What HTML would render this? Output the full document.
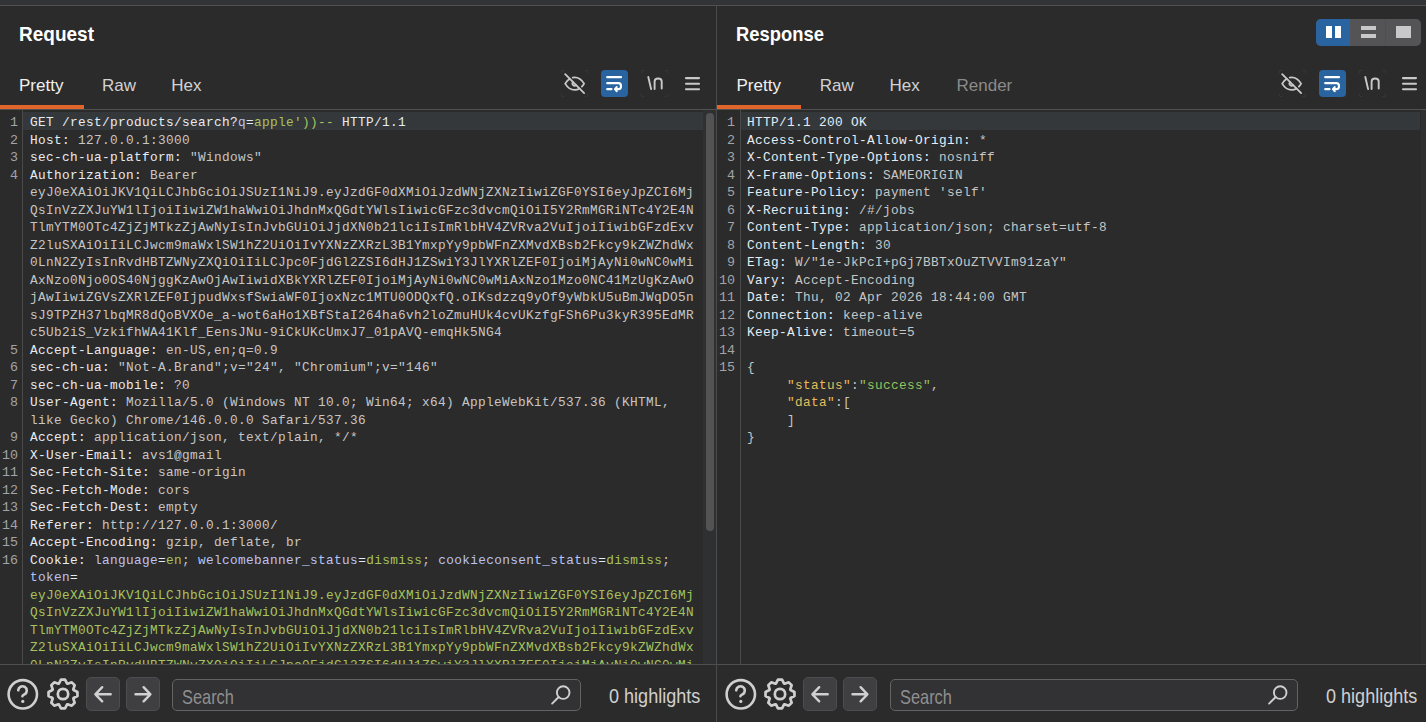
<!DOCTYPE html><html><head><meta charset="utf-8"><style>
*{margin:0;padding:0;box-sizing:border-box}
html,body{width:1426px;height:722px;overflow:hidden;background:#2b2b2b}
body{position:relative;font-family:"Liberation Sans",sans-serif}
.topstrip{position:absolute;left:0;top:0;width:1426px;height:5px;background:#333437}
.topline{position:absolute;left:0;top:5px;width:1426px;height:1px;background:#505052}
.divider{position:absolute;left:716px;top:6px;width:1px;height:716px;background:#4b4b4b}
.title{position:absolute;top:22px;height:24px;line-height:24px;font-weight:bold;color:#ffffff;transform:translateY(-0.5px) scaleY(1.06);transform-origin:0 0}
.tab{position:absolute;top:75px;height:22px;line-height:22px;font-size:17px;color:#d2d2d2}
.tab.sel{color:#f0f0f0}
.tab.dis{color:#8a8a8a}
.uline{position:absolute;top:105px;width:84px;height:4px;background:#e0652b}
.sepline{position:absolute;left:0;top:109px;width:1426px;height:1px;background:#515151}
.ic{position:absolute;display:block}
.bluebtn{position:absolute;width:27px;height:27px;border-radius:4px;background:#2964a0}
.bluebtn svg{display:block}
.hl{position:absolute;top:112px;width:679px;height:18px;background:#34383b}
.track{position:absolute;top:110px;width:13px;height:554px;background:#2f3031}
.thumb{position:absolute;top:113px;width:7.6px;height:418px;border-radius:3.8px;background:#535354}
.gutline{position:absolute;top:110px;width:1px;height:554px;background:#4a4a4a}
.code{position:absolute;top:0;width:703px;height:664px;overflow:hidden;clip-path:inset(110px 0 0 0)}
.row{position:absolute;left:30px;height:17.5px;line-height:17.5px;white-space:pre;font-family:"Liberation Mono",monospace;font-size:12.75px;letter-spacing:0.35px;color:#c6c6c6}
.ln{position:absolute;left:0;width:18px;text-align:right;height:17.5px;line-height:17.5px;font-family:"Liberation Mono",monospace;font-size:13.333px;color:#a2a4a8}
.hn{color:#e6ecf4}
.hv{color:#c6c6c6}
.ck{color:#b9c4f4}
.gr{color:#a6c35f}
.jk{color:#e4bd5e}
.js{color:#93c45e}
.botline{position:absolute;left:0;top:664px;width:1426px;height:1px;background:#4f4f4f}
.navbtn{position:absolute;top:677px;width:34px;height:34px;border-radius:5px;background:#3f3f41;border:1px solid #4d4d4f}
.navbtn svg{display:block;margin:-1px}
.search{position:absolute;top:679px;width:409px;height:32px;border-radius:5px;background:#323234;border:1.5px solid #636363}
.search span{position:absolute;left:9px;top:5px;line-height:22px;font-size:18px;color:#8f8f8f;transform:scale(0.91,1.1);transform-origin:0 0}
.hlcount{position:absolute;top:683px;line-height:24px;font-size:19px;color:#d0d0d0;transform:translateY(0.5px) scale(0.95,1.08);transform-origin:0 0}
.layout{position:absolute;left:1316px;top:19px;width:105px;height:27px;border-radius:5px;background:#545456;overflow:hidden}
.layout .b{position:absolute;left:0;top:0;width:34px;height:27px;background:#2964a0}
</style></head><body>
<div class="topstrip"></div><div class="topline"></div>
<div class="sepline"></div><div class="botline"></div>
<div class="title" style="left:19px;font-size:19px">Request</div>
<div class="tab sel" style="left:19px">Pretty</div>
<div class="tab " style="left:102px">Raw</div>
<div class="tab " style="left:171.3px">Hex</div>
<div class="uline" style="left:0px"></div>
<svg class="ic" style="left:561px;top:70px" width="27" height="27" viewBox="0 0 27 27" fill="none" stroke="#333537" stroke-width="1"><path d="M0.5 3.5V0.5H3.5M23.5 0.5H26.5V3.5M26.5 23.5V26.5H23.5M3.5 26.5H0.5V23.5"/></svg>
<svg class="ic" style="left:641px;top:70px" width="27" height="27" viewBox="0 0 27 27" fill="none" stroke="#333537" stroke-width="1"><path d="M0.5 3.5V0.5H3.5M23.5 0.5H26.5V3.5M26.5 23.5V26.5H23.5M3.5 26.5H0.5V23.5"/></svg>
<svg class="ic" style="left:561.9px;top:70.9px" width="25.3" height="25.3" viewBox="0 0 24 24" fill="none" stroke="#c9c9c9" stroke-width="1.7" stroke-linecap="round" stroke-linejoin="round"><path d="M10.585 10.587a2 2 0 0 0 2.829 2.828"/><path d="M16.681 16.673a8.717 8.717 0 0 1 -4.681 1.327c-3.6 0 -6.6 -2 -9 -6c1.272 -2.12 2.712 -3.678 4.32 -4.674m2.86 -1.146a9.055 9.055 0 0 1 1.82 -.18c3.6 0 6.6 2 9 6c-.666 1.11 -1.379 2.067 -2.138 2.87"/><path d="M3 3l18 18"/></svg>
<div class="bluebtn" style="left:601px;top:70px"><svg width="27" height="27" viewBox="-3.19 -1.15 31.3 27" preserveAspectRatio="none" fill="none" stroke="#ffffff" stroke-width="2.1" stroke-linecap="round" stroke-linejoin="round"><path vector-effect="non-scaling-stroke" d="M4 6h16"/><path vector-effect="non-scaling-stroke" d="M4 18h5"/><path vector-effect="non-scaling-stroke" d="M4 12h13a3 3 0 0 1 0 6h-4l2 -2m0 4l-2 -2"/></svg></div>
<svg class="ic" style="left:641px;top:70px" width="27" height="27" viewBox="0 0 27 27" fill="none" stroke="#c9c9c9" stroke-width="1.9" stroke-linecap="round" stroke-linejoin="round"><path d="M7.3 7.0L10.1 19.1"/><path d="M13.6 19V11.6C13.6 9.6 15.2 8.5 17.15 8.5C19.1 8.5 20.7 9.6 20.7 11.6V18.6"/></svg>
<svg class="ic" style="left:685px;top:70px" width="27" height="27" viewBox="0 0 27 27" fill="none" stroke="#c9c9c9" stroke-width="2.1" stroke-linecap="round"><path d="M1 8.1h13M1 13.7h13M1 19.2h13"/></svg>
<div class="hl" style="left:23px;width:680px"></div>
<div class="track" style="left:703px"></div>
<div class="thumb" style="left:706px"></div>
<div class="gutline" style="left:22px"></div>
<div class="code" style="left:0px"><div class="ln" style="top:114.00px">1</div>
<div class="row" style="top:114.00px"><span class="hn">GET /rest/products/search?</span><span class="ck">q</span><span class="hn">=</span><span class="gr">apple'))--</span><span class="hn"> HTTP/1.1</span></div>
<div class="ln" style="top:131.50px">2</div>
<div class="row" style="top:131.50px"><span class="hn">Host:</span><span class="hv"> 127.0.0.1:3000</span></div>
<div class="ln" style="top:149.00px">3</div>
<div class="row" style="top:149.00px"><span class="hn">sec-ch-ua-platform:</span><span class="hv"> "Windows"</span></div>
<div class="ln" style="top:166.50px">4</div>
<div class="row" style="top:166.50px"><span class="hn">Authorization:</span><span class="hv"> Bearer</span></div>
<div class="row" style="top:184.00px"><span class="hv">eyJ0eXAiOiJKV1QiLCJhbGciOiJSUzI1NiJ9.eyJzdGF0dXMiOiJzdWNjZXNzIiwiZGF0YSI6eyJpZCI6Mj</span></div>
<div class="row" style="top:201.50px"><span class="hv">QsInVzZXJuYW1lIjoiIiwiZW1haWwiOiJhdnMxQGdtYWlsIiwicGFzc3dvcmQiOiI5Y2RmMGRiNTc4Y2E4N</span></div>
<div class="row" style="top:219.00px"><span class="hv">TlmYTM0OTc4ZjZjMTkzZjAwNyIsInJvbGUiOiJjdXN0b21lciIsImRlbHV4ZVRva2VuIjoiIiwibGFzdExv</span></div>
<div class="row" style="top:236.50px"><span class="hv">Z2luSXAiOiIiLCJwcm9maWxlSW1hZ2UiOiIvYXNzZXRzL3B1YmxpYy9pbWFnZXMvdXBsb2Fkcy9kZWZhdWx</span></div>
<div class="row" style="top:254.00px"><span class="hv">0LnN2ZyIsInRvdHBTZWNyZXQiOiIiLCJpc0FjdGl2ZSI6dHJ1ZSwiY3JlYXRlZEF0IjoiMjAyNi0wNC0wMi</span></div>
<div class="row" style="top:271.50px"><span class="hv">AxNzo0Njo0OS40NjggKzAwOjAwIiwidXBkYXRlZEF0IjoiMjAyNi0wNC0wMiAxNzo1Mzo0NC41MzUgKzAwO</span></div>
<div class="row" style="top:289.00px"><span class="hv">jAwIiwiZGVsZXRlZEF0IjpudWxsfSwiaWF0IjoxNzc1MTU0ODQxfQ.oIKsdzzq9yOf9yWbkU5uBmJWqDO5n</span></div>
<div class="row" style="top:306.50px"><span class="hv">sJ9TPZH37lbqMR8dQoBVXOe_a-wot6aHo1XBfStaI264ha6vh2loZmuHUk4cvUKzfgFSh6Pu3kyR395EdMR</span></div>
<div class="row" style="top:324.00px"><span class="hv">c5Ub2iS_VzkifhWA41Klf_EensJNu-9iCkUKcUmxJ7_01pAVQ-emqHk5NG4</span></div>
<div class="ln" style="top:341.50px">5</div>
<div class="row" style="top:341.50px"><span class="hn">Accept-Language:</span><span class="hv"> en-US,en;q=0.9</span></div>
<div class="ln" style="top:359.00px">6</div>
<div class="row" style="top:359.00px"><span class="hn">sec-ch-ua:</span><span class="hv"> "Not-A.Brand";v="24", "Chromium";v="146"</span></div>
<div class="ln" style="top:376.50px">7</div>
<div class="row" style="top:376.50px"><span class="hn">sec-ch-ua-mobile:</span><span class="hv"> ?0</span></div>
<div class="ln" style="top:394.00px">8</div>
<div class="row" style="top:394.00px"><span class="hn">User-Agent:</span><span class="hv"> Mozilla/5.0 (Windows NT 10.0; Win64; x64) AppleWebKit/537.36 (KHTML,</span></div>
<div class="row" style="top:411.50px"><span class="hv">like Gecko) Chrome/146.0.0.0 Safari/537.36</span></div>
<div class="ln" style="top:429.00px">9</div>
<div class="row" style="top:429.00px"><span class="hn">Accept:</span><span class="hv"> application/json, text/plain, */*</span></div>
<div class="ln" style="top:446.50px">10</div>
<div class="row" style="top:446.50px"><span class="hn">X-User-Email:</span><span class="hv"> avs1@gmail</span></div>
<div class="ln" style="top:464.00px">11</div>
<div class="row" style="top:464.00px"><span class="hn">Sec-Fetch-Site:</span><span class="hv"> same-origin</span></div>
<div class="ln" style="top:481.50px">12</div>
<div class="row" style="top:481.50px"><span class="hn">Sec-Fetch-Mode:</span><span class="hv"> cors</span></div>
<div class="ln" style="top:499.00px">13</div>
<div class="row" style="top:499.00px"><span class="hn">Sec-Fetch-Dest:</span><span class="hv"> empty</span></div>
<div class="ln" style="top:516.50px">14</div>
<div class="row" style="top:516.50px"><span class="hn">Referer:</span><span class="hv"> http://127.0.0.1:3000/</span></div>
<div class="ln" style="top:534.00px">15</div>
<div class="row" style="top:534.00px"><span class="hn">Accept-Encoding:</span><span class="hv"> gzip, deflate, br</span></div>
<div class="ln" style="top:551.50px">16</div>
<div class="row" style="top:551.50px"><span class="hn">Cookie:</span><span class="hv"> </span><span class="ck">language</span><span class="hn">=</span><span class="gr">en</span><span class="hv">; </span><span class="ck">welcomebanner_status</span><span class="hn">=</span><span class="gr">dismiss</span><span class="hv">; </span><span class="ck">cookieconsent_status</span><span class="hn">=</span><span class="gr">dismiss</span><span class="hv">; </span></div>
<div class="row" style="top:569.00px"><span class="ck">token</span><span class="hn">=</span></div>
<div class="row" style="top:586.50px"><span class="gr">eyJ0eXAiOiJKV1QiLCJhbGciOiJSUzI1NiJ9.eyJzdGF0dXMiOiJzdWNjZXNzIiwiZGF0YSI6eyJpZCI6Mj</span></div>
<div class="row" style="top:604.00px"><span class="gr">QsInVzZXJuYW1lIjoiIiwiZW1haWwiOiJhdnMxQGdtYWlsIiwicGFzc3dvcmQiOiI5Y2RmMGRiNTc4Y2E4N</span></div>
<div class="row" style="top:621.50px"><span class="gr">TlmYTM0OTc4ZjZjMTkzZjAwNyIsInJvbGUiOiJjdXN0b21lciIsImRlbHV4ZVRva2VuIjoiIiwibGFzdExv</span></div>
<div class="row" style="top:639.00px"><span class="gr">Z2luSXAiOiIiLCJwcm9maWxlSW1hZ2UiOiIvYXNzZXRzL3B1YmxpYy9pbWFnZXMvdXBsb2Fkcy9kZWZhdWx</span></div>
<div class="row" style="top:656.50px"><span class="gr">0LnN2ZyIsInRvdHBTZWNyZXQiOiIiLCJpc0FjdGl2ZSI6dHJ1ZSwiY3JlYXRlZEF0IjoiMjAyNi0wNC0wMi</span></div>
<div class="row" style="top:674.00px"><span class="gr">AxNzo0Njo0OS40NjggKzAwOjAwIiwidXBkYXRlZEF0IjoiMjAyNi0wNC0wMiAxNzo1Mzo0NC41MzUgKzAwO</span></div></div>
<svg class="ic" style="left:7px;top:676px" width="36" height="36" viewBox="0 0 36 36" fill="none" stroke="#cfcfcf" stroke-width="2.6" stroke-linecap="round" stroke-linejoin="round"><circle cx="15.8" cy="18.3" r="14.2"/><path d="M11.2 14.3A4.3 4.3 0 1 1 17.6 18.3C16.2 19.1 15.4 19.5 15.4 20.2"/><circle cx="15.8" cy="25.4" r="1.6" fill="#cfcfcf" stroke="none"/></svg>
<svg class="ic" style="left:45px;top:676px" width="36" height="36" viewBox="0 0 36 36" fill="none" stroke="#cfcfcf" stroke-width="2.7" stroke-linejoin="round"><path d="M28.58 14.02 L32.46 15.96 L32.46 20.04 L28.58 21.98 L28.29 22.66 L29.66 26.78 L26.78 29.66 L22.66 28.29 L21.98 28.58 L20.04 32.46 L15.96 32.46 L14.02 28.58 L13.34 28.29 L9.22 29.66 L6.34 26.78 L7.71 22.66 L7.42 21.98 L3.54 20.04 L3.54 15.96 L7.42 14.02 L7.71 13.34 L6.34 9.22 L9.22 6.34 L13.34 7.71 L14.02 7.42 L15.96 3.54 L20.04 3.54 L21.98 7.42 L22.66 7.71 L26.78 6.34 L29.66 9.22 L28.29 13.34Z"/><circle cx="18" cy="18" r="5.2"/></svg>
<div class="navbtn" style="left:86px"><svg width="34" height="34" viewBox="0 0 34 34" fill="none" stroke="#d0d0d0" stroke-width="2.4" stroke-linecap="round" stroke-linejoin="round"><path d="M9.4 17.3h15.3M16.2 10.2L9.4 17.3L16.2 24.3"/></svg></div>
<div class="navbtn" style="left:126px"><svg width="34" height="34" viewBox="0 0 34 34" fill="none" stroke="#d0d0d0" stroke-width="2.4" stroke-linecap="round" stroke-linejoin="round"><path d="M9.5 17.3h14.9M17.6 10.2L24.4 17.3L17.6 24.3"/></svg></div>
<div class="search" style="left:172px;width:409px"><span>Search</span></div>
<svg class="ic" style="left:548px;top:679px" width="32" height="32" viewBox="0 0 32 32" fill="none" stroke="#cfcfcf" stroke-width="1.9" stroke-linecap="round"><circle cx="15.2" cy="13.6" r="6.3"/><path d="M10.7 18L4.1 24.6"/></svg>
<div class="hlcount" style="left:609px">0 highlights</div>
<div class="title" style="left:736px;font-size:18.4px">Response</div>
<div class="tab sel" style="left:736.5px">Pretty</div>
<div class="tab " style="left:819.8px">Raw</div>
<div class="tab " style="left:889.5px">Hex</div>
<div class="tab dis" style="left:956.5px">Render</div>
<div class="uline" style="left:717px"></div>
<svg class="ic" style="left:1279px;top:70px" width="27" height="27" viewBox="0 0 27 27" fill="none" stroke="#333537" stroke-width="1"><path d="M0.5 3.5V0.5H3.5M23.5 0.5H26.5V3.5M26.5 23.5V26.5H23.5M3.5 26.5H0.5V23.5"/></svg>
<svg class="ic" style="left:1359px;top:70px" width="27" height="27" viewBox="0 0 27 27" fill="none" stroke="#333537" stroke-width="1"><path d="M0.5 3.5V0.5H3.5M23.5 0.5H26.5V3.5M26.5 23.5V26.5H23.5M3.5 26.5H0.5V23.5"/></svg>
<svg class="ic" style="left:1278.9px;top:70.9px" width="25.3" height="25.3" viewBox="0 0 24 24" fill="none" stroke="#c9c9c9" stroke-width="1.7" stroke-linecap="round" stroke-linejoin="round"><path d="M10.585 10.587a2 2 0 0 0 2.829 2.828"/><path d="M16.681 16.673a8.717 8.717 0 0 1 -4.681 1.327c-3.6 0 -6.6 -2 -9 -6c1.272 -2.12 2.712 -3.678 4.32 -4.674m2.86 -1.146a9.055 9.055 0 0 1 1.82 -.18c3.6 0 6.6 2 9 6c-.666 1.11 -1.379 2.067 -2.138 2.87"/><path d="M3 3l18 18"/></svg>
<div class="bluebtn" style="left:1319px;top:70px"><svg width="27" height="27" viewBox="-3.19 -1.15 31.3 27" preserveAspectRatio="none" fill="none" stroke="#ffffff" stroke-width="2.1" stroke-linecap="round" stroke-linejoin="round"><path vector-effect="non-scaling-stroke" d="M4 6h16"/><path vector-effect="non-scaling-stroke" d="M4 18h5"/><path vector-effect="non-scaling-stroke" d="M4 12h13a3 3 0 0 1 0 6h-4l2 -2m0 4l-2 -2"/></svg></div>
<svg class="ic" style="left:1358px;top:70px" width="27" height="27" viewBox="0 0 27 27" fill="none" stroke="#c9c9c9" stroke-width="1.9" stroke-linecap="round" stroke-linejoin="round"><path d="M7.3 7.0L10.1 19.1"/><path d="M13.6 19V11.6C13.6 9.6 15.2 8.5 17.15 8.5C19.1 8.5 20.7 9.6 20.7 11.6V18.6"/></svg>
<svg class="ic" style="left:1402px;top:70px" width="27" height="27" viewBox="0 0 27 27" fill="none" stroke="#c9c9c9" stroke-width="2.1" stroke-linecap="round"><path d="M1 8.1h13M1 13.7h13M1 19.2h13"/></svg>
<div class="hl" style="left:741px;width:679px"></div>
<div class="track" style="left:1421px"></div>
<div class="gutline" style="left:740px"></div>
<div class="code" style="left:717px"><div class="ln" style="top:114.00px">1</div>
<div class="row" style="top:114.00px"><span class="hn">HTTP/1.1 200 OK</span></div>
<div class="ln" style="top:131.50px">2</div>
<div class="row" style="top:131.50px"><span class="hn">Access-Control-Allow-Origin:</span><span class="hv"> *</span></div>
<div class="ln" style="top:149.00px">3</div>
<div class="row" style="top:149.00px"><span class="hn">X-Content-Type-Options:</span><span class="hv"> nosniff</span></div>
<div class="ln" style="top:166.50px">4</div>
<div class="row" style="top:166.50px"><span class="hn">X-Frame-Options:</span><span class="hv"> SAMEORIGIN</span></div>
<div class="ln" style="top:184.00px">5</div>
<div class="row" style="top:184.00px"><span class="hn">Feature-Policy:</span><span class="hv"> payment 'self'</span></div>
<div class="ln" style="top:201.50px">6</div>
<div class="row" style="top:201.50px"><span class="hn">X-Recruiting:</span><span class="hv"> /#/jobs</span></div>
<div class="ln" style="top:219.00px">7</div>
<div class="row" style="top:219.00px"><span class="hn">Content-Type:</span><span class="hv"> application/json; charset=utf-8</span></div>
<div class="ln" style="top:236.50px">8</div>
<div class="row" style="top:236.50px"><span class="hn">Content-Length:</span><span class="hv"> 30</span></div>
<div class="ln" style="top:254.00px">9</div>
<div class="row" style="top:254.00px"><span class="hn">ETag:</span><span class="hv"> W/"1e-JkPcI+pGj7BBTxOuZTVVIm91zaY"</span></div>
<div class="ln" style="top:271.50px">10</div>
<div class="row" style="top:271.50px"><span class="hn">Vary:</span><span class="hv"> Accept-Encoding</span></div>
<div class="ln" style="top:289.00px">11</div>
<div class="row" style="top:289.00px"><span class="hn">Date:</span><span class="hv"> Thu, 02 Apr 2026 18:44:00 GMT</span></div>
<div class="ln" style="top:306.50px">12</div>
<div class="row" style="top:306.50px"><span class="hn">Connection:</span><span class="hv"> keep-alive</span></div>
<div class="ln" style="top:324.00px">13</div>
<div class="row" style="top:324.00px"><span class="hn">Keep-Alive:</span><span class="hv"> timeout=5</span></div>
<div class="ln" style="top:341.50px">14</div>
<div class="row" style="top:341.50px"></div>
<div class="ln" style="top:359.00px">15</div>
<div class="row" style="top:359.00px"><span class="hv">{</span></div>
<div class="row" style="top:376.50px"><span class="hv">     </span><span class="jk">"status"</span><span class="hv">:</span><span class="js">"success"</span><span class="hv">,</span></div>
<div class="row" style="top:394.00px"><span class="hv">     </span><span class="jk">"data"</span><span class="hv">:[</span></div>
<div class="row" style="top:411.50px"><span class="hv">     ]</span></div>
<div class="row" style="top:429.00px"><span class="hv">}</span></div></div>
<svg class="ic" style="left:725px;top:676px" width="36" height="36" viewBox="0 0 36 36" fill="none" stroke="#cfcfcf" stroke-width="2.6" stroke-linecap="round" stroke-linejoin="round"><circle cx="15.8" cy="18.3" r="14.2"/><path d="M11.2 14.3A4.3 4.3 0 1 1 17.6 18.3C16.2 19.1 15.4 19.5 15.4 20.2"/><circle cx="15.8" cy="25.4" r="1.6" fill="#cfcfcf" stroke="none"/></svg>
<svg class="ic" style="left:762px;top:676px" width="36" height="36" viewBox="0 0 36 36" fill="none" stroke="#cfcfcf" stroke-width="2.7" stroke-linejoin="round"><path d="M28.58 14.02 L32.46 15.96 L32.46 20.04 L28.58 21.98 L28.29 22.66 L29.66 26.78 L26.78 29.66 L22.66 28.29 L21.98 28.58 L20.04 32.46 L15.96 32.46 L14.02 28.58 L13.34 28.29 L9.22 29.66 L6.34 26.78 L7.71 22.66 L7.42 21.98 L3.54 20.04 L3.54 15.96 L7.42 14.02 L7.71 13.34 L6.34 9.22 L9.22 6.34 L13.34 7.71 L14.02 7.42 L15.96 3.54 L20.04 3.54 L21.98 7.42 L22.66 7.71 L26.78 6.34 L29.66 9.22 L28.29 13.34Z"/><circle cx="18" cy="18" r="5.2"/></svg>
<div class="navbtn" style="left:803px"><svg width="34" height="34" viewBox="0 0 34 34" fill="none" stroke="#d0d0d0" stroke-width="2.4" stroke-linecap="round" stroke-linejoin="round"><path d="M9.4 17.3h15.3M16.2 10.2L9.4 17.3L16.2 24.3"/></svg></div>
<div class="navbtn" style="left:843px"><svg width="34" height="34" viewBox="0 0 34 34" fill="none" stroke="#d0d0d0" stroke-width="2.4" stroke-linecap="round" stroke-linejoin="round"><path d="M9.5 17.3h14.9M17.6 10.2L24.4 17.3L17.6 24.3"/></svg></div>
<div class="search" style="left:890px;width:408px"><span>Search</span></div>
<svg class="ic" style="left:1265px;top:679px" width="32" height="32" viewBox="0 0 32 32" fill="none" stroke="#cfcfcf" stroke-width="1.9" stroke-linecap="round"><circle cx="15.2" cy="13.6" r="6.3"/><path d="M10.7 18L4.1 24.6"/></svg>
<div class="hlcount" style="left:1326px">0 highlights</div>
<div class="divider"></div>
<div class="layout"><div class="b"></div>
<div style="position:absolute;left:10px;top:7px;width:6px;height:12px;background:#fff"></div>
<div style="position:absolute;left:19px;top:7px;width:6px;height:12px;background:#fff"></div>
<div style="position:absolute;left:45px;top:7px;width:15px;height:4px;background:#c8c8c8"></div>
<div style="position:absolute;left:45px;top:15px;width:15px;height:4px;background:#c8c8c8"></div>
<div style="position:absolute;left:69px;top:0;width:1px;height:27px;background:#4f4f51"></div>
<div style="position:absolute;left:80px;top:7px;width:15px;height:12px;background:#c8c8c8"></div>
</div>
</body></html>
